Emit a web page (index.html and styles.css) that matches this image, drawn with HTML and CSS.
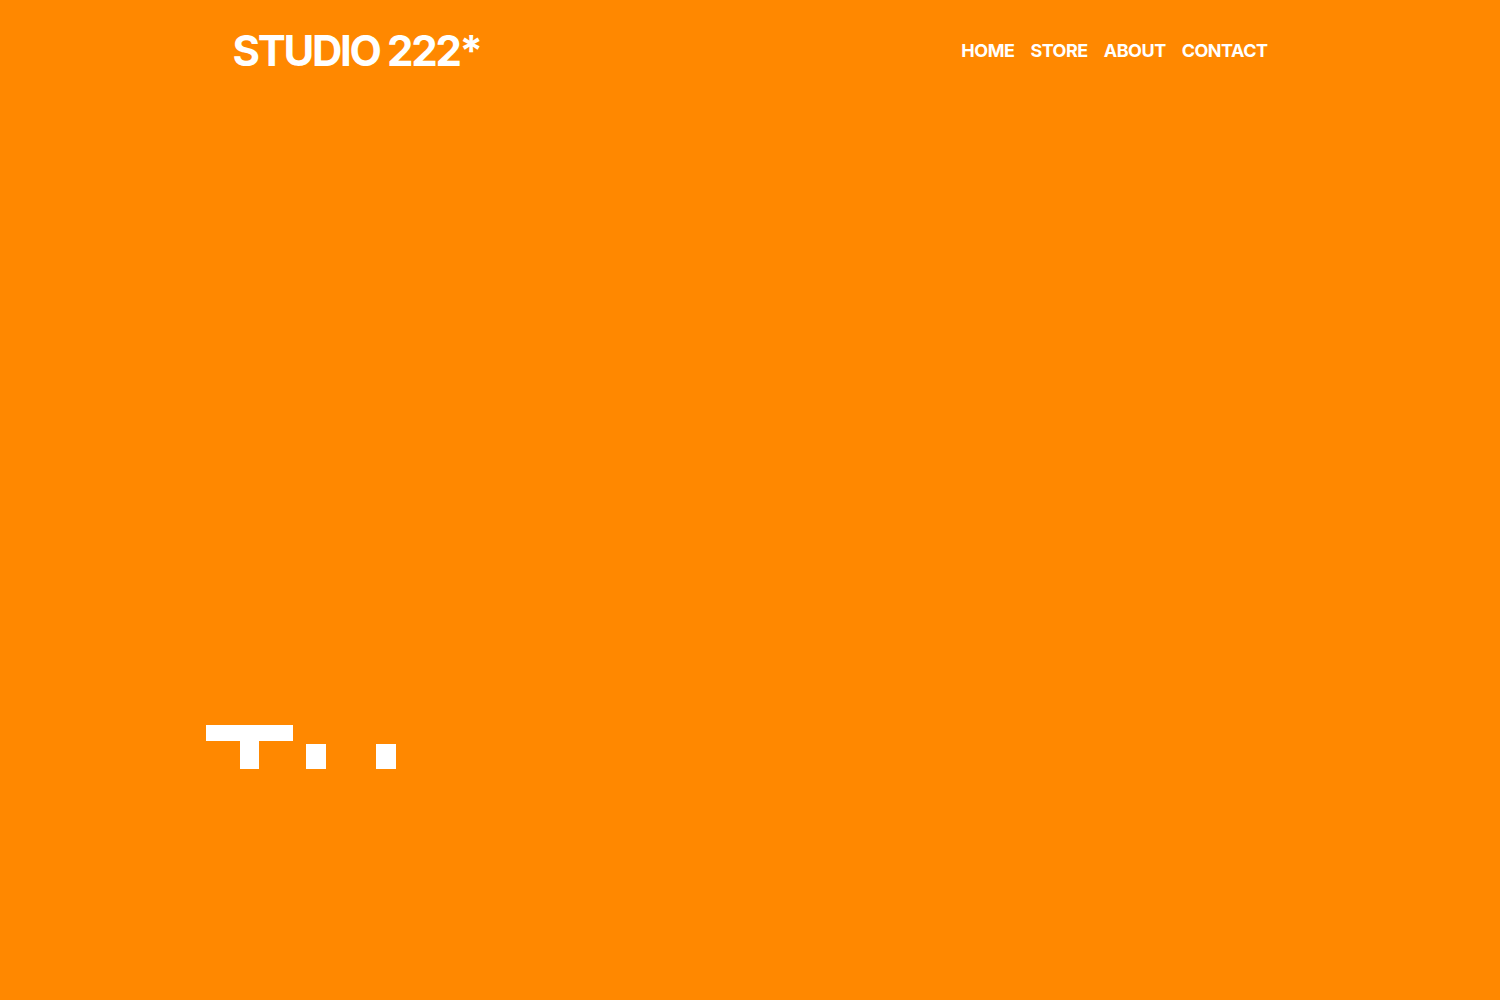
FILE: index.html
```html
<!DOCTYPE html>
<html lang="en">
<head>
<meta charset="utf-8">
<title>Studio 222*</title>
<link rel="stylesheet" href="styles.css">
</head>
<body>
<div class="page">
  <header class="header">
    <a class="logo" href="#">STUDIO 222*</a>
    <nav class="nav">
      <a href="#">HOME</a>
      <a href="#">STORE</a>
      <a href="#">ABOUT</a>
      <a href="#">CONTACT</a>
    </nav>
  </header>
  <main class="hero">
    <svg class="pixels" width="190" height="45" viewBox="0 0 190 45" aria-hidden="true">
      <rect x="0" y="0" width="87" height="16" fill="#fff"/>
      <rect x="34" y="16" width="19" height="28" fill="#fff"/>
      <rect x="100" y="19" width="20" height="25" fill="#fff"/>
      <rect x="170" y="19" width="20" height="25" fill="#fff"/>
    </svg>
  </main>
</div>
</body>
</html>
```

FILE: styles.css
```css
html, body {
  margin: 0;
  padding: 0;
  background: #ff8800;
}
body {
  font-family: Inter, "Liberation Sans", sans-serif;
  color: #fff;
  width: 1500px;
  height: 1000px;
  overflow: hidden;
}
.page {
  width: 1500px;
}
.header {
  width: 1035px;
  margin: 0 auto;
  padding-top: 30px;
  display: flex;
  justify-content: space-between;
  align-items: center;
}
.logo {
  color: #fff;
  text-decoration: none;
  font-size: 42px;
  font-weight: 700;
  line-height: 42px;
  letter-spacing: -2.3px;
}
.nav {
  display: flex;
  gap: 16px;
}
.nav a {
  color: #fff;
  text-decoration: none;
  font-size: 18px;
  font-weight: 700;
  line-height: 18px;
  letter-spacing: -0.5px;
}
.hero {
  padding-top: 653px;
  padding-left: 206px;
}
.pixels {
  display: block;
}
```
